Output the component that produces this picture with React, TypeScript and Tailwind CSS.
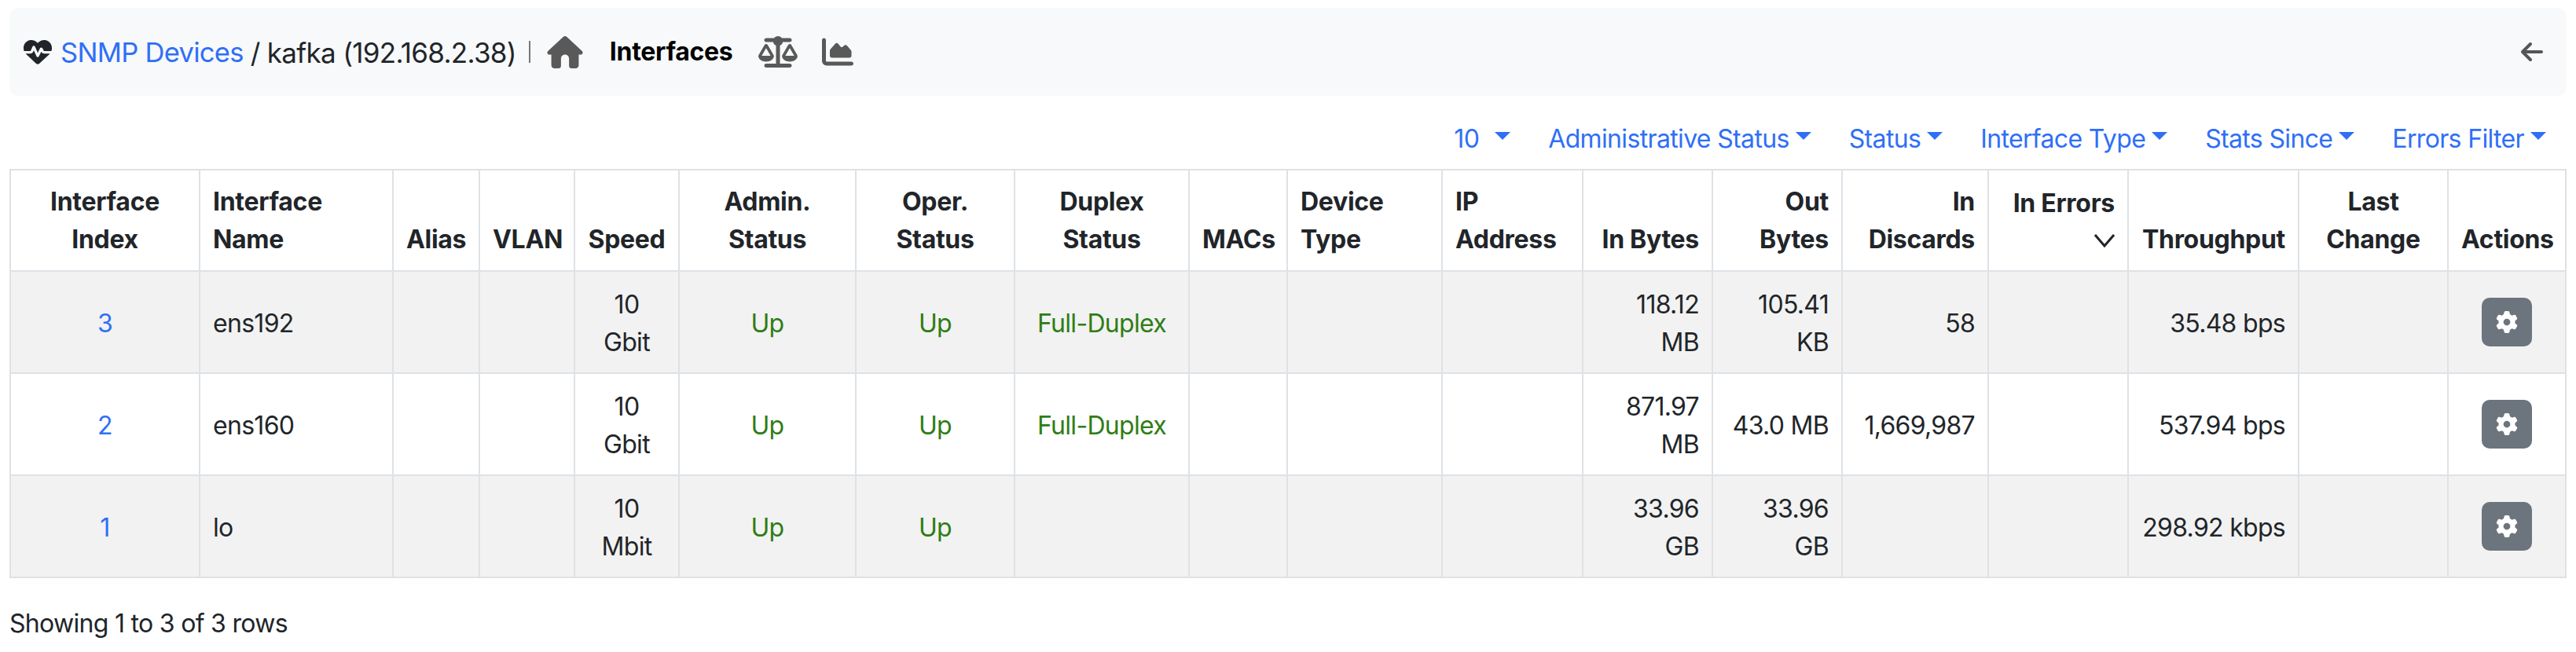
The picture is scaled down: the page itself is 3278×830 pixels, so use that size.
import { FaHeartPulse, FaScaleBalanced, FaChartArea, FaArrowLeft, FaGear } from "react-icons/fa6";

const border = "border-2 border-[#dee2e6]";

type Col = { w: number; head: string[]; align: string };

const cols: Col[] = [
  { w: 241, head: ["Interface", "Index"], align: "text-center" },
  { w: 246, head: ["Interface", "Name"], align: "text-left" },
  { w: 110, head: ["Alias"], align: "text-center" },
  { w: 121, head: ["VLAN"], align: "text-center" },
  { w: 133, head: ["Speed"], align: "text-center" },
  { w: 225, head: ["Admin.", "Status"], align: "text-center" },
  { w: 202, head: ["Oper.", "Status"], align: "text-center" },
  { w: 222, head: ["Duplex", "Status"], align: "text-center" },
  { w: 125, head: ["MACs"], align: "text-center" },
  { w: 197, head: ["Device", "Type"], align: "text-left" },
  { w: 179, head: ["IP", "Address"], align: "text-left" },
  { w: 165, head: ["In Bytes"], align: "text-right" },
  { w: 165, head: ["Out", "Bytes"], align: "text-right" },
  { w: 186, head: ["In", "Discards"], align: "text-right" },
  { w: 178, head: ["In Errors"], align: "text-right" },
  { w: 217, head: ["Throughput"], align: "text-right" },
  { w: 190, head: ["Last", "Change"], align: "text-center" },
  { w: 150, head: ["Actions"], align: "text-center" },
];

const rows = [
  { idx: "3", name: "ens192", speed: ["10", "Gbit"], duplex: "Full-Duplex", inB: ["118.12", "MB"], outB: ["105.41", "KB"], disc: "58", tp: "35.48 bps" },
  { idx: "2", name: "ens160", speed: ["10", "Gbit"], duplex: "Full-Duplex", inB: ["871.97", "MB"], outB: ["43.0 MB"], disc: "1,669,987", tp: "537.94 bps" },
  { idx: "1", name: "lo", speed: ["10", "Mbit"], duplex: "", inB: ["33.96", "GB"], outB: ["33.96", "GB"], disc: "", tp: "298.92 kbps" },
];

const filters = ["10", "Administrative Status", "Status", "Interface Type", "Stats Since", "Errors Filter"];

function Lines({ parts }: { parts: string[] }) {
  return (
    <>
      {parts.map((p) => (
        <div key={p}>{p}</div>
      ))}
    </>
  );
}

function HomeIcon() {
  return (
    <svg viewBox="0 0 44 40" className="h-[41px] w-[46px] fill-[#595959]">
      <path d="M22 0c.9 0 1.7.3 2.3 1l18.6 17.4c1 .9 1.3 2 .9 3-.4 1-1.3 1.6-2.4 1.6H39v13c0 2.200-1.800 4-4 4h-5c-1.700 0-3-1.300-3-3v-9c0-2.800-2.200-5-5-5s-5 2.200-5 5v9c0 1.700-1.300 3-3 3H9c-2.200 0-4-1.800-4-4V23H2.600c-1.100 0-2-.6-2.400-1.600s-.1-2.100.9-3L19.700 1c.6-.7 1.400-1 2.300-1z" />
    </svg>
  );
}

export default function App() {
  return (
    <div className="min-h-[830px] bg-white px-[12px] pt-[10px] font-['Inter',sans-serif] text-[32px] leading-[48px] tracking-[-0.7px] text-[#212529]">
      <div className="flex h-[112px] items-center rounded-[12px] bg-[#f8f9fa] pl-[18px] pr-[28px]">
        <FaHeartPulse className="mr-[11px] h-[36px] w-[36px] text-[#212529]" />
        <a className="pt-[2px] text-[34.500px] text-[#2f6ff6]">SNMP Devices</a>
        <span className="ml-[9px] pt-[2px] text-[35px]">/ kafka (192.168.2.38)</span>
        <span className="ml-[16px] h-[28px] w-[2px] bg-[#777]" />
        <span className="ml-[21px]"><HomeIcon /></span>
        <span className="ml-[34px] font-bold tracking-[-0.3px] text-black">Interfaces</span>
        <FaScaleBalanced className="ml-[33px] h-[40px] w-[50px] text-[#595959]" />
        <FaChartArea className="ml-[31px] h-[40px] w-[40px] text-[#595959]" />
        <FaArrowLeft className="ml-auto h-[32px] w-[32px] text-[#555]" />
      </div>

      <div className="mt-[16px] mr-[2px] flex h-[77px] items-center justify-end tracking-[-0.65px]">
        {filters.map((f) => (
          <button key={f} type="button" className="flex items-center px-[24px] text-[#2f6ff6]">
            {f}
            <span className={`${f === "10" ? "ml-[20px]" : "ml-[8px]"} mb-[8px] h-0 w-0 border-x-[10px] border-t-[10px] border-x-transparent border-t-[#2f6ff6]`} />
          </button>
        ))}
      </div>

      <table className="w-[3252px] table-fixed border-collapse">
        <colgroup>
          {cols.map((c) => (
            <col key={c.head.join()} style={{ width: c.w }} />
          ))}
        </colgroup>
        <thead>
          <tr>
            {cols.map((c) => (
              <th key={c.head.join()} className={`${border} h-[129px] px-[16px] pb-[15px] pt-[13px] align-bottom font-bold tracking-[-0.3px] ${c.align}`}>
                <Lines parts={c.head} />
                {c.head[0] === "In Errors" && (
                  <svg viewBox="0 0 26 16" className="ml-auto mb-[14px] mt-[14px] h-[18px] w-[26px] fill-none stroke-[#212529] stroke-[3]">
                    <path d="M1 1l12 14L25 1" />
                  </svg>
                )}
              </th>
            ))}
          </tr>
        </thead>
        <tbody>
          {rows.map((r, i) => {
            const cells = [
              <a className="text-[#2f6ff6]">{r.idx}</a>,
              r.name,
              "",
              "",
              <Lines parts={r.speed} />,
              <span className="text-[#2f7d15]">Up</span>,
              <span className="text-[#2f7d15]">Up</span>,
              <span className="text-[#2f7d15]">{r.duplex}</span>,
              "",
              "",
              "",
              <Lines parts={r.inB} />,
              <Lines parts={r.outB} />,
              r.disc,
              "",
              r.tp,
              "",
              <button type="button" className="relative -top-[2px] mx-auto flex h-[62px] w-[64px] items-center justify-center rounded-[10px] bg-[#6c757d]">
                <FaGear className="h-[28px] w-[28px] text-white" />
              </button>,
            ];
            return (
              <tr key={r.idx} className={i % 2 === 0 ? "bg-[#f2f2f2]" : "bg-white"}>
                {cells.map((c, j) => (
                  <td key={j} className={`${border} h-[130px] px-[16px] pb-[14px] pt-[18px] align-middle ${cols[j].align}`}>
                    {c}
                  </td>
                ))}
              </tr>
            );
          })}
        </tbody>
      </table>

      <div className="mt-[34px]">Showing 1 to 3 of 3 rows</div>
    </div>
  );
}
